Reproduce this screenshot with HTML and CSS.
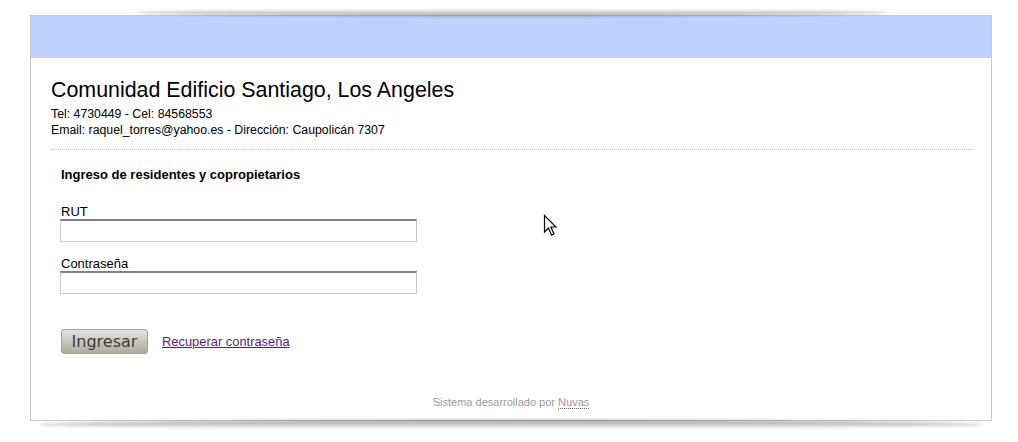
FILE: index.html
```html
<!DOCTYPE html>
<html lang="es">
<head>
    <meta charset="UTF-8">
    <title>Comunidad Edificio Santiago</title>
    <link rel="stylesheet" href="styles.css">
</head>
<body>
    <div class="page">
        <div class="page-header"></div>
        <div class="page-body">
            <h1>Comunidad Edificio Santiago, Los Angeles</h1>
            <p class="info">Tel: 4730449 - Cel: 84568553<br>Email: raquel_torres@yahoo.es - Dirección: Caupolicán 7307</p>
            <hr class="divider">
            <form class="login">
                <h2>Ingreso de residentes y copropietarios</h2>
                <label for="rut">RUT</label>
                <input type="text" id="rut">
                <label for="pass">Contraseña</label>
                <input type="password" id="pass">
                <div class="actions">
                    <button type="button">Ingresar</button>
                    <a href="#" class="recover">Recuperar contraseña</a>
                </div>
            </form>
            <p class="footer">Sistema desarrollado por <a href="#">Nuvas</a></p>
        </div>
    </div>

    <svg class="cursor" width="14" height="24" viewBox="0 0 14 24">
        <path d="M1.5 1.5 L1.5 18 L5.5 14 L8.5 21 L11 20 L8 13 L13 13 Z" fill="#fff" stroke="#000" stroke-width="1.2" stroke-linejoin="miter"/>
    </svg>
</body>
</html>
```

FILE: styles.css
```css
body {
    margin: 0;
    padding: 15px 0 20px;
    background-color: #fff;
    font-family: "Liberation Sans", Arial, sans-serif;
    color: #000;
}
.page {
    position: relative;
    width: 960px;
    margin-left: 30px;
    border: 1px solid #c8c8c8;
    background-color: #fff;
}
/* curled shadows above and below the page */
.page::before,
.page::after {
    content: "";
    position: absolute;
    filter: blur(1.5px);
    border-radius: 50%;
}
.page::before {
    top: -7px;
    left: 104px;
    right: 102px;
    height: 7px;
    background: linear-gradient(to top, rgba(0, 0, 0, 0.4), rgba(0, 0, 0, 0));
}
.page::after {
    top: 100%;
    left: 8px;
    right: 8px;
    height: 9px;
    background: linear-gradient(rgba(0, 0, 0, 0.4), rgba(0, 0, 0, 0));
}
.page-header {
    height: 42px;
    background-color: #bfd1fe;
}
.page-body {
    padding: 20px 20px 0;
}
.page-body h1 {
    margin: 0;
    font-size: 21.4px;
    font-weight: normal;
    line-height: 24px;
}
.info {
    margin: 4px 0 0;
    font-size: 12.3px;
    line-height: 16px;
}
.divider {
    margin: 11px 0 0;
    border: 0;
    border-top: 1px dotted #bbb;
    height: 0;
}
.login {
    padding: 17px 0 0 9px;
    display: flex;
    flex-direction: column;
    align-items: flex-start;
}
.login h2 {
    margin: 0 0 20px 1px;
    font-size: 13px;
    line-height: 16px;
}
.login label {
    box-sizing: border-box;
    height: 16px;
    padding-top: 2px;
    font-size: 13px;
    line-height: 14px;
    margin-left: 1px;
}
.login input {
    box-sizing: border-box;
    width: 357px;
    height: 23px;
    margin: 0 0 13px;
    padding: 2px 4px;
    border: 1px solid #c8c8c8;
    border-top: 2px solid #808080;
    background-color: #fff;
}
.actions {
    margin-top: 22px;
    display: flex;
    align-items: center;
    gap: 14px;
    margin-left: 1px;
}
.actions button {
    width: 87px;
    height: 25px;
    padding: 0;
    border: 1px solid #a6a294;
    border-radius: 3px;
    background: linear-gradient(#e4e2dc, #aeab9d);
    color: #3c3c3c;
    font-family: "DejaVu Sans", sans-serif;
    font-size: 16px;
}
.recover {
    font-size: 12.9px;
    color: #551a8b;
}
.footer {
    margin: 41px 0 0;
    padding-bottom: 11px;
    text-align: center;
    font-size: 11px;
    line-height: 14px;
    color: #999;
}
.footer a {
    color: #999;
    text-decoration: none;
    border-bottom: 1px dotted #666;
}
.cursor {
    position: absolute;
    left: 543px;
    top: 214px;
}
```
